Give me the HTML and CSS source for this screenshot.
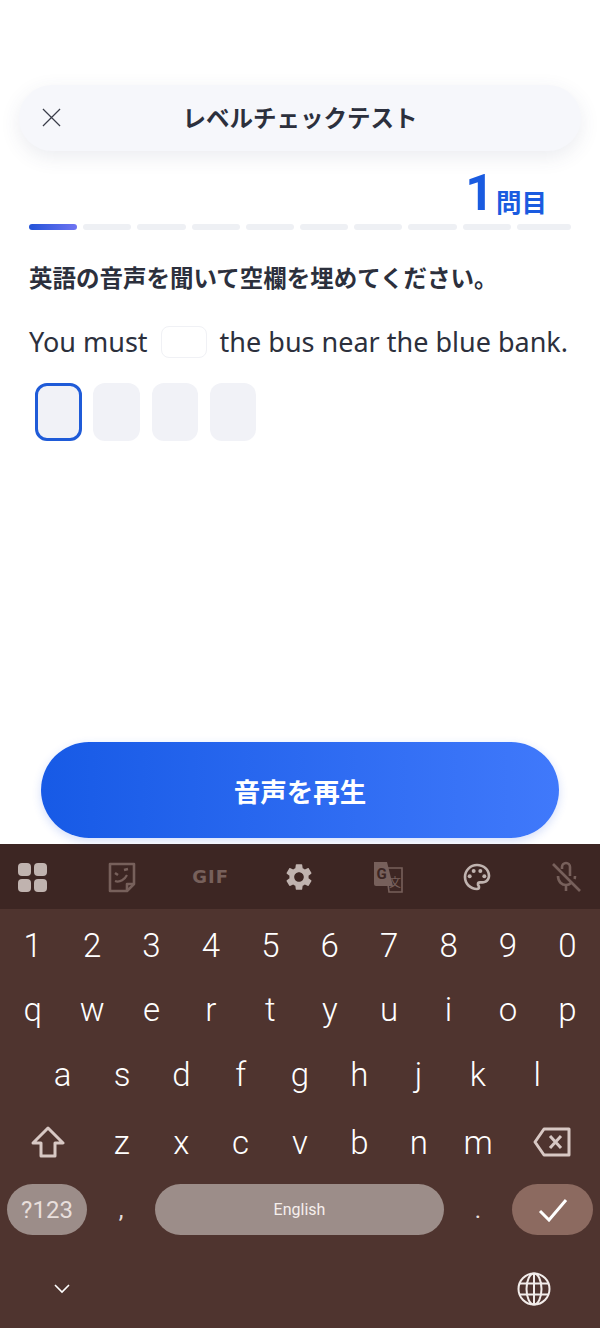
FILE: index.html
```html
<!DOCTYPE html>
<html lang="ja">

<head>
  <meta charset="UTF-8">
  <title>レベルチェックテスト</title>
  <link rel="stylesheet" href="styles.css">
</head>

<body>
  <div class="app">
    <div class="header">
      <svg class="close-icon" viewBox="0 0 20 20"><path d="M1 1L19 19M19 1L1 19" /></svg>
      <div class="header-title">レベルチェックテスト</div>
    </div>

    <div class="counter"><span class="counter-num">1</span><span class="counter-unit">問目</span></div>

    <div class="progress">
      <div class="seg active"></div>
      <div class="seg"></div>
      <div class="seg"></div>
      <div class="seg"></div>
      <div class="seg"></div>
      <div class="seg"></div>
      <div class="seg"></div>
      <div class="seg"></div>
      <div class="seg"></div>
      <div class="seg last"></div>
    </div>

    <div class="question">英語の音声を聞いて空欄を埋めてください。</div>

    <div class="sentence">
      <span>You must</span>
      <span class="blank"></span>
      <span>the bus near the blue bank.</span>
    </div>

    <div class="letters">
      <div class="letter focus"></div>
      <div class="letter"></div>
      <div class="letter"></div>
      <div class="letter"></div>
    </div>

    <button class="play-btn">音声を再生</button>
  </div>

  <div class="keyboard">
    <div class="toolbar">
      <svg class="tool" viewBox="0 0 32 32"><rect x="1" y="2" width="13" height="13" rx="4" fill="#c0b3af" /><rect x="17" y="2" width="13" height="13" rx="4" fill="#c0b3af" /><rect x="1" y="18" width="13" height="13" rx="4" fill="#c0b3af" /><rect x="17" y="18" width="13" height="13" rx="4" fill="#c0b3af" /></svg>
      <svg class="tool" viewBox="0 0 32 32" fill="none" stroke="#77605b" stroke-width="2.6" stroke-linejoin="round"><path d="M4 3H28V23L21 30H4Z" /><path d="M28 23H21V30" /><path d="M9 20C14 22 19 18 21 14" stroke-width="2.2" /><path d="M9 12L12 14M18 9L22 8" /></svg>
      <div class="tool gif">GIF</div>
      <svg class="tool" viewBox="0 0 24 24"><path fill="#c0b3af" d="M19.14 12.94c.04-.3.06-.61.06-.94 0-.32-.02-.64-.07-.94l2.03-1.58c.18-.14.23-.41.12-.61l-1.92-3.32c-.12-.22-.37-.29-.59-.22l-2.39.96c-.5-.38-1.03-.7-1.62-.94l-.36-2.54c-.04-.24-.24-.41-.48-.41h-3.84c-.24 0-.43.17-.47.41l-.36 2.54c-.59.24-1.13.57-1.62.94l-2.39-.96c-.22-.08-.47 0-.59.22L2.74 8.87c-.12.21-.08.47.12.61l2.03 1.58c-.05.3-.09.63-.09.94s.02.64.07.94l-2.03 1.58c-.18.14-.23.41-.12.61l1.92 3.32c.12.22.37.29.59.22l2.39-.96c.5.38 1.03.7 1.62.94l.36 2.54c.05.24.24.41.48.41h3.84c.24 0 .44-.17.47-.41l.36-2.54c.59-.24 1.13-.56 1.62-.94l2.39.96c.22.08.47 0 .59-.22l1.92-3.32c.12-.22.07-.47-.12-.61l-2.01-1.58zM12 15.6c-1.98 0-3.6-1.62-3.6-3.6s1.62-3.6 3.6-3.6 3.6 1.62 3.6 3.6-1.62 3.6-3.6 3.6z" /></svg>
      <svg class="tool" viewBox="0 0 32 32"><path d="M14 7H30V31H17Z" fill="none" stroke="#77605b" stroke-width="1.6" /><path d="M2 1H15L21 25H4A2 2 0 0 1 2 23Z" fill="#77605b" /><text x="4.500" y="18" class="tr-g">G</text><text x="17" y="26" class="tr-a">文</text></svg>
      <svg class="tool" viewBox="0 0 24 24"><path fill="#c0b3af" d="M12 22C6.49 22 2 17.51 2 12S6.49 2 12 2s10 4.04 10 9c0 3.31-2.69 6-6 6h-1.77c-.28 0-.5.22-.5.5 0 .12.05.23.13.33.41.47.64 1.06.64 1.67A2.5 2.5 0 0 1 12 22zm0-18c-4.41 0-8 3.59-8 8s3.59 8 8 8c.28 0 .5-.22.5-.5a.54.54 0 0 0-.14-.35c-.41-.46-.63-1.05-.63-1.65a2.5 2.5 0 0 1 2.5-2.5H16c2.21 0 4-1.79 4-4 0-3.86-3.59-7-8-7z" /><circle cx="6.5" cy="11.5" r="1.5" fill="#c0b3af" /><circle cx="9.5" cy="7.5" r="1.5" fill="#c0b3af" /><circle cx="14.5" cy="7.5" r="1.5" fill="#c0b3af" /><circle cx="17.5" cy="11.5" r="1.5" fill="#c0b3af" /></svg>
      <svg class="tool" viewBox="0 0 32 32" fill="none" stroke="#77605b" stroke-width="2.6"><path d="M3 3L30 30" /><path d="M12 8V6A4 4 0 0 1 20 6V15" /><path d="M8 15C8 21 12 24 16 24C18 24 20 23 21 22M25 15C25 16 25 17 24.500 18" /><path d="M16 24V30" /></svg>
    </div>

    <div class="key-row digits">
      <div class="key">1</div><div class="key">2</div><div class="key">3</div><div class="key">4</div><div class="key">5</div><div class="key">6</div><div class="key">7</div><div class="key">8</div><div class="key">9</div><div class="key">0</div>
    </div>
    <div class="key-row letters-1">
      <div class="key">q</div><div class="key">w</div><div class="key">e</div><div class="key">r</div><div class="key">t</div><div class="key">y</div><div class="key">u</div><div class="key">i</div><div class="key">o</div><div class="key">p</div>
    </div>
    <div class="key-row letters-2">
      <div class="key">a</div><div class="key">s</div><div class="key">d</div><div class="key">f</div><div class="key">g</div><div class="key">h</div><div class="key">j</div><div class="key">k</div><div class="key">l</div>
    </div>
    <div class="key-row letters-3">
      <div class="key wide">
        <svg class="shift-icon" viewBox="0 0 34 32"><path d="M17 2L32 17H24V30H10V17H2Z" /></svg>
      </div>
      <div class="key">z</div><div class="key">x</div><div class="key">c</div><div class="key">v</div><div class="key">b</div><div class="key">n</div><div class="key">m</div>
      <div class="key wide">
        <svg class="back-icon" viewBox="0 0 38 30"><path d="M11 2H36V28H11L2 15Z" /><path d="M17 9L28 21M28 9L17 21" /></svg>
      </div>
    </div>
    <div class="bottom-row">
      <div class="pill sym">?123</div>
      <div class="punct comma">,</div>
      <div class="pill space">English</div>
      <div class="punct">.</div>
      <div class="pill enter">
        <svg class="check-icon" viewBox="0 0 30 24"><path d="M2 13L11 22L28 2" /></svg>
      </div>
    </div>
    <div class="nav-row">
      <svg class="chevron" viewBox="0 0 16 10"><path d="M1 1L8 8L15 1" /></svg>
      <svg class="globe" viewBox="0 0 34 34"><circle cx="17" cy="17" r="15.500" /><ellipse cx="17" cy="17" rx="7.500" ry="15.500" /><path d="M2.500 11.500H31.500M2.500 22.500H31.500M17 1.500V32.500" /></svg>
    </div>
  </div>
</body>

</html>
```

FILE: styles.css
```css
* {
  margin: 0;
  padding: 0;
  box-sizing: border-box;
}

body {
  width: 600px;
  height: 1328px;
  overflow: hidden;
  background: #fff;
  font-family: "Noto Sans CJK JP", "Noto Sans", sans-serif;
  color: #2c303d;
}

/* app area */
.app {
  height: 844px;
  padding: 85px 29px 0;
  display: flex;
  flex-direction: column;
}

.header {
  height: 66px;
  margin: 0 -10px;
  padding-left: 23px;
  display: flex;
  align-items: center;
  background: #f6f7fb;
  border-radius: 33px;
  box-shadow: 0 6px 20px rgba(60, 70, 110, 0.1);
}

.close-icon {
  width: 19px;
  height: 19px;
  margin-bottom: 2px;
  fill: none;
  stroke: #3a3d49;
  stroke-width: 1.3;
}

.header-title {
  flex: 1;
  margin: 0 0 2px -42px;
  text-align: center;
  font-size: 23.500px;
  font-weight: 700;
  line-height: 32px;
}

.counter {
  height: 73px;
  padding: 0 24px 5px 0;
  display: flex;
  justify-content: flex-end;
  align-items: flex-end;
  color: #1a5be0;
  font-weight: 700;
}

.counter-num {
  font-family: Roboto, sans-serif;
  font-size: 50px;
  line-height: 52px;
  margin-right: 2px;
}

.counter-unit {
  font-size: 25.500px;
  line-height: 36px;
}

/* progress */
.progress {
  display: flex;
  gap: 6px;
}

.seg {
  width: 48.200px;
  height: 6px;
  border-radius: 3px;
  background: #eef0f4;
}

.seg.active {
  background: linear-gradient(90deg, #2353d8, #6f74f2);
}

.seg.last {
  width: 54px;
}

.question {
  margin-top: 30px;
  font-size: 23.500px;
  font-weight: 700;
  line-height: 34px;
}

.sentence {
  margin-top: 30px;
  display: flex;
  align-items: center;
  font-family: "Noto Sans", sans-serif;
  font-size: 27px;
  line-height: 36px;
  color: #2c303d;
  white-space: nowrap;
}

.blank {
  width: 46px;
  height: 32px;
  margin: 0 13px;
  background: #fff;
  border: 1px solid #f0f1f5;
  border-radius: 8px;
}

.letters {
  margin: 23px 0 0 6px;
  display: flex;
  gap: 11.800px;
}

.letter {
  width: 46.500px;
  height: 58px;
  background: #f1f2f7;
  border-radius: 12px;
}

.letter.focus {
  border: 3px solid #1f5bd8;
}

.play-btn {
  width: 518px;
  height: 96px;
  margin: auto 0 6px 12px;
  border: none;
  border-radius: 48px;
  background: linear-gradient(90deg, #175ae6, #4079fb);
  box-shadow: 0 3px 10px rgba(40, 90, 230, 0.2);
  color: #fff;
  font-family: inherit;
  font-size: 26.500px;
  font-weight: 700;
}

/* keyboard */
.keyboard {
  height: 484px;
  background: #4f342f;
  color: #fff;
  font-family: Roboto, sans-serif;
}

.toolbar {
  height: 65px;
  margin-bottom: 4px;
  padding: 0 18px 0 17px;
  display: flex;
  justify-content: space-between;
  align-items: center;
  background: #3d2623;
}

.tool {
  width: 32px;
  height: 32px;
}

.gif {
  display: flex;
  align-items: center;
  justify-content: center;
  font-family: "DejaVu Sans", sans-serif;
  font-size: 18px;
  font-weight: 700;
  letter-spacing: 1px;
  color: #77605b;
}

.tr-g {
  font-family: Roboto, sans-serif;
  font-size: 15px;
  font-weight: 700;
  fill: #3d2623;
}

.tr-a {
  font-family: "Noto Sans CJK SC", sans-serif;
  font-size: 12px;
  fill: #77605b;
}

.key-row {
  height: 65px;
  padding: 0 3px;
  display: flex;
}

.key-row.digits {
  height: 64px;
}

.key-row.letters-2 {
  padding: 0 33px;
}

.key-row.letters-3 {
  height: 70px;
}

.key {
  flex: 1;
  display: flex;
  align-items: center;
  justify-content: center;
  font-size: 33px;
  font-weight: 350;
}

.key.wide {
  flex: 1.500;
}

.shift-icon {
  width: 34px;
  height: 32px;
  fill: none;
  stroke: #d8c8c4;
  stroke-width: 3;
  stroke-linejoin: round;
}

.back-icon {
  width: 38px;
  height: 30px;
  fill: none;
  stroke: #d8c8c4;
  stroke-width: 3;
  stroke-linejoin: round;
}

.bottom-row {
  height: 51px;
  margin-top: 7px;
  padding: 0 7px;
  display: flex;
  align-items: stretch;
}

.pill {
  display: flex;
  align-items: center;
  justify-content: center;
  border-radius: 26px;
}

.sym {
  width: 80px;
  background: #9c8d89;
  font-size: 24px;
  color: #e8dfdc;
}

.space {
  width: 289px;
  background: #9c8d89;
  font-size: 16px;
  color: #f5efed;
}

.enter {
  width: 81px;
  background: #8c6a60;
}

.check-icon {
  width: 30px;
  height: 24px;
  fill: none;
  stroke: #fff;
  stroke-width: 3;
}

.punct {
  width: 68px;
  display: flex;
  align-items: center;
  justify-content: center;
  font-size: 24px;
  color: #e6dedb;
}

.nav-row {
  margin-top: 37px;
  padding: 0 49px 0 54px;
  display: flex;
  align-items: center;
  justify-content: space-between;
}

.chevron {
  width: 16px;
  height: 10px;
  fill: none;
  stroke: #fff;
  stroke-width: 1.600;
}

.globe {
  width: 34px;
  height: 34px;
  fill: none;
  stroke: #f2ecea;
  stroke-width: 2;
}
```
